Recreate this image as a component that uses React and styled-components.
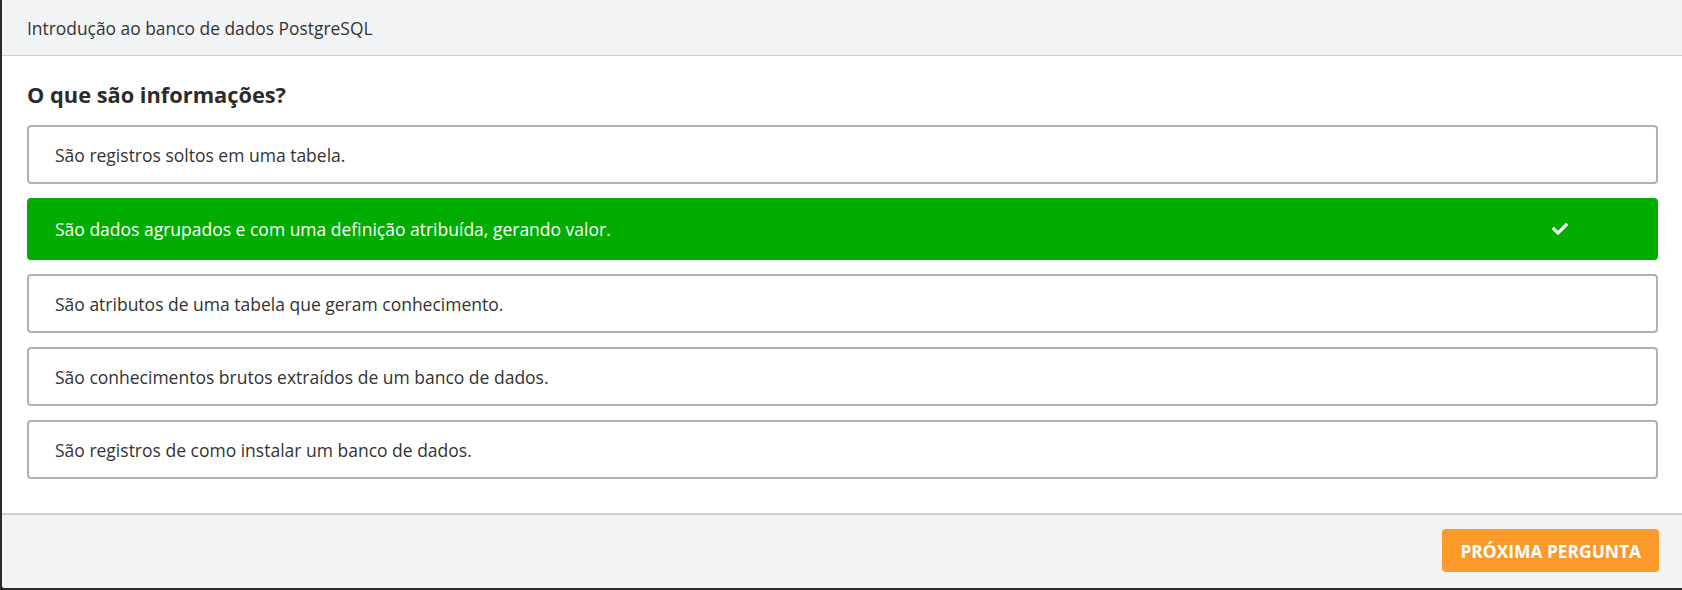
import React, { useState } from 'react';
import styled, { createGlobalStyle } from 'styled-components';
import { FaCheck } from 'react-icons/fa';

const GlobalStyle = createGlobalStyle`
  html, body {
    margin: 0;
    padding: 0;
    background: #2b2b2b;
  }
  body {
    font-family: "Open Sans", "Liberation Sans", sans-serif;
  }
`;

const Panel = styled.div`
  margin: 0 0 2px 2px;
  height: 588px;
  background: #fff;
  display: flex;
  flex-direction: column;
  border-bottom-left-radius: 3px;
  overflow: hidden;
`;

const Header = styled.div`
  height: 55px;
  flex-shrink: 0;
  display: flex;
  align-items: center;
  padding-left: 25px;
  background: #f2f3f5;
  border-bottom: 1px solid #cdd1d6;
  font-size: 17.4px;
  color: #333;
`;

const Body = styled.div`
  flex: 1;
  padding: 25px 24px 0 25px;
`;

const Question = styled.h2`
  margin: 0 0 16px;
  font-size: 21.8px;
  line-height: 28px;
  font-weight: 700;
  color: #2b2b2b;
`;

const OptionList = styled.div`
  display: flex;
  flex-direction: column;
  gap: 14px;
`;

const Option = styled.div`
  box-sizing: border-box;
  height: ${(p) => (p.$correct ? '62px' : '59px')};
  display: flex;
  align-items: center;
  justify-content: space-between;
  padding: 0 88px 0 26px;
  border: 2px solid ${(p) => (p.$correct ? '#00ad00' : '#aab2ba')};
  border-radius: 4px;
  background: ${(p) => (p.$correct ? '#00ad00' : '#fff')};
  color: ${(p) => (p.$correct ? '#fff' : '#333')};
  font-size: 17.5px;
  cursor: pointer;

  svg {
    font-size: 16px;
  }
`;

const Footer = styled.div`
  flex-shrink: 0;
  height: 59px;
  display: flex;
  align-items: flex-start;
  justify-content: flex-end;
  padding: 14px 23px 0 0;
  background: #f2f3f5;
  border-top: 2px solid #ccd0d5;
`;

const NextButton = styled.button`
  height: 43px;
  padding: 0 18px;
  border: none;
  border-radius: 4px;
  background: #fb9a2b;
  color: #fff;
  font-family: inherit;
  font-size: 17.4px;
  font-weight: 700;
  cursor: pointer;
`;

const options = [
  'São registros soltos em uma tabela.',
  'São dados agrupados e com uma definição atribuída, gerando valor.',
  'São atributos de uma tabela que geram conhecimento.',
  'São conhecimentos brutos extraídos de um banco de dados.',
  'São registros de como instalar um banco de dados.',
];

function App() {
  const [selected, setSelected] = useState(1);

  return (
    <>
      <GlobalStyle />
      <Panel>
        <Header>Introdução ao banco de dados PostgreSQL</Header>
        <Body>
          <Question>O que são informações?</Question>
          <OptionList>
            {options.map((text, idx) => (
              <Option
                key={idx}
                $correct={selected === idx}
                onClick={() => setSelected(idx)}
              >
                <span>{text}</span>
                {selected === idx && <FaCheck />}
              </Option>
            ))}
          </OptionList>
        </Body>
        <Footer>
          <NextButton>PRÓXIMA PERGUNTA</NextButton>
        </Footer>
      </Panel>
    </>
  );
}

export default App;
